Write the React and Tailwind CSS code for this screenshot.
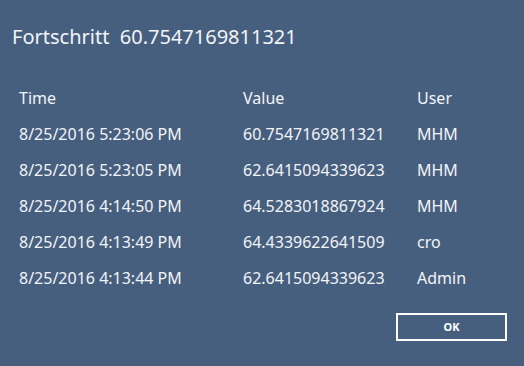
const rows = [
  { time: '8/25/2016 5:23:06 PM', value: '60.7547169811321', user: 'MHM' },
  { time: '8/25/2016 5:23:05 PM', value: '62.6415094339623', user: 'MHM' },
  { time: '8/25/2016 4:14:50 PM', value: '64.5283018867924', user: 'MHM' },
  { time: '8/25/2016 4:13:49 PM', value: '64.4339622641509', user: 'cro' },
  { time: '8/25/2016 4:13:44 PM', value: '62.6415094339623', user: 'Admin' },
]

export default function App() {
  return (
    <div
      className="w-[524px] h-[366px] bg-[#475f7f] text-[#f2f4f7] flex flex-col"
      style={{ fontFamily: '"Noto Sans", "Open Sans", sans-serif' }}
    >
      {/* Titel */}
      <h1 className="pl-[12px] pt-[22px] text-[20px] leading-[30px] font-normal">
        Fortschritt&nbsp;&nbsp;60.7547169811321
      </h1>

      {/* Tabelle */}
      <div className="mt-[28px] pl-[19px] text-[16px]">
        <div className="grid grid-cols-[224px_174px_1fr] h-[36px] items-center">
          <span>Time</span>
          <span>Value</span>
          <span>User</span>
        </div>
        {rows.map((r, i) => (
          <div key={i} className="grid grid-cols-[224px_174px_1fr] h-[36px] items-center">
            <span>{r.time}</span>
            <span>{r.value}</span>
            <span>{r.user}</span>
          </div>
        ))}
      </div>

      <div className="flex justify-end pr-[17px] mt-[17px]">
        <button className="w-[111px] h-[28px] border-2 border-white text-white text-[11px] font-bold">
          OK
        </button>
      </div>
    </div>
  )
}
